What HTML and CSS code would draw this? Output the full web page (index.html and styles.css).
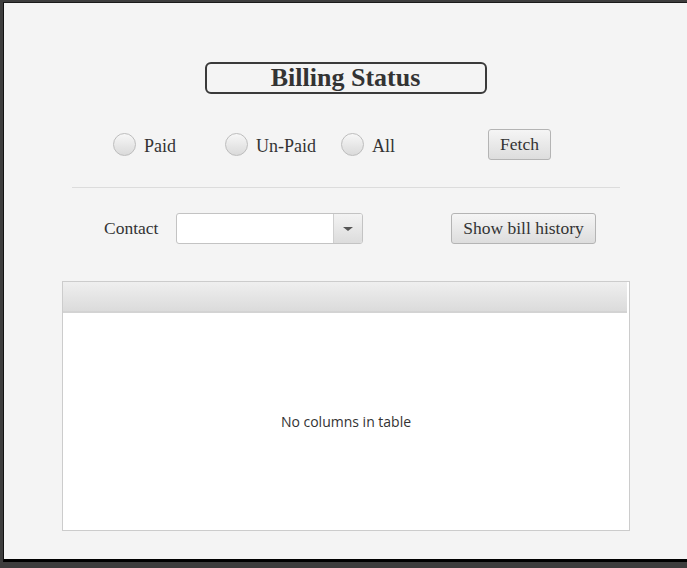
FILE: index.html
```html
<!DOCTYPE html>
<html>
<head>
<meta charset="utf-8">
<link rel="stylesheet" href="styles.css">
</head>
<body>
<div class="window">
  <div class="title-box">Billing Status</div>
  <div class="filter-row">
    <label class="radio r-paid"><span class="circle"></span><span class="lbl">Paid</span></label>
    <label class="radio r-unpaid"><span class="circle"></span><span class="lbl">Un-Paid</span></label>
    <label class="radio r-all"><span class="circle"></span><span class="lbl">All</span></label>
    <button class="btn btn-fetch">Fetch</button>
  </div>
  <div class="separator"></div>
  <div class="contact-row">
    <span class="contact-lbl">Contact</span>
    <div class="combo"><div class="combo-field"></div><div class="combo-arrow"><span class="tri"></span></div></div>
    <button class="btn btn-history">Show bill history</button>
  </div>
  <div class="table">
    <div class="table-header"></div>
    <div class="table-body">No columns in table</div>
  </div>
</div>
</body>
</html>
```
FILE: styles.css
```css
html, body {
  margin: 0;
  padding: 0;
}
body {
  background: #3d3d3d;
  width: 687px;
  height: 568px;
  overflow: hidden;
  font-family: "Liberation Serif", "Times New Roman", serif;
  color: #333;
}
.window {
  margin: 2px 0 0 3px;
  border-top: 1px solid #1a1a1a;
  border-left: 1px solid #111;
  border-bottom: 3px solid #000;
  background: #f4f4f4;
  width: 683px;
  height: 556px;
  display: flex;
  flex-direction: column;
  box-sizing: content-box;
}
.title-box {
  margin: 59px auto 0;
  width: 282px;
  height: 32px;
  box-sizing: border-box;
  border: 2px solid #3a3a3a;
  border-radius: 6px;
  text-align: center;
  font-weight: bold;
  font-size: 26px;
  line-height: 27px;
}
.filter-row {
  margin-top: 35px;
  height: 31px;
  display: flex;
  align-items: center;
}
.radio {
  display: flex;
  align-items: center;
  font-size: 18px;
}
.lbl {
  padding-top: 4px;
}
.circle {
  width: 23px;
  height: 23px;
  box-sizing: border-box;
  border-radius: 50%;
  border: 1px solid #bdbdbd;
  background: linear-gradient(#f7f7f7, #dadada);
  margin-right: 8px;
}
.r-paid { margin-left: 109px; }
.r-unpaid { margin-left: 49px; }
.r-all { margin-left: 25px; }
.btn {
  font-family: "Liberation Serif", "Times New Roman", serif;
  font-size: 17.5px;
  color: #333;
  height: 31px;
  box-sizing: border-box;
  border: 1px solid #b4b4b4;
  border-radius: 3px;
  background: linear-gradient(#f5f5f5, #dddddd);
  padding: 0;
}
.btn-fetch {
  width: 63px;
  margin-left: 93px;
}
.separator {
  margin: 27px 0 0 68px;
  width: 548px;
  height: 1px;
  background: #dcdcdc;
}
.contact-row {
  margin-top: 25px;
  height: 31px;
  display: flex;
  align-items: center;
}
.contact-lbl {
  font-size: 17.5px;
  margin-left: 100px;
  width: 72px;
}
.combo {
  width: 187px;
  height: 31px;
  box-sizing: border-box;
  border: 1px solid #c3c3c3;
  border-radius: 3px;
  background: #fff;
  display: flex;
  overflow: hidden;
}
.combo-field {
  flex: 1;
}
.combo-arrow {
  width: 28px;
  border-left: 1px solid #cfcfcf;
  background: linear-gradient(#f3f3f3, #dcdcdc);
  display: flex;
  align-items: center;
  justify-content: center;
}
.tri {
  width: 0;
  height: 0;
  border-left: 5px solid transparent;
  border-right: 5px solid transparent;
  border-top: 4px solid #555;
}
.btn-history {
  width: 145px;
  margin-left: 88px;
}
.table {
  margin: 37px 0 0 58px;
  width: 568px;
  height: 250px;
  box-sizing: border-box;
  border: 1px solid #cccccc;
  background: #fff;
  display: flex;
  flex-direction: column;
}
.table-header {
  width: 564px;
  height: 31px;
  box-sizing: border-box;
  background: linear-gradient(#efefef, #dbdbdb);
  border-bottom: 2px solid #d3d3d3;
}
.table-body {
  flex: 1;
  display: flex;
  align-items: center;
  justify-content: center;
  font-family: "Open Sans", "Noto Sans", sans-serif;
  font-size: 14px;
  color: #333;
}
```
